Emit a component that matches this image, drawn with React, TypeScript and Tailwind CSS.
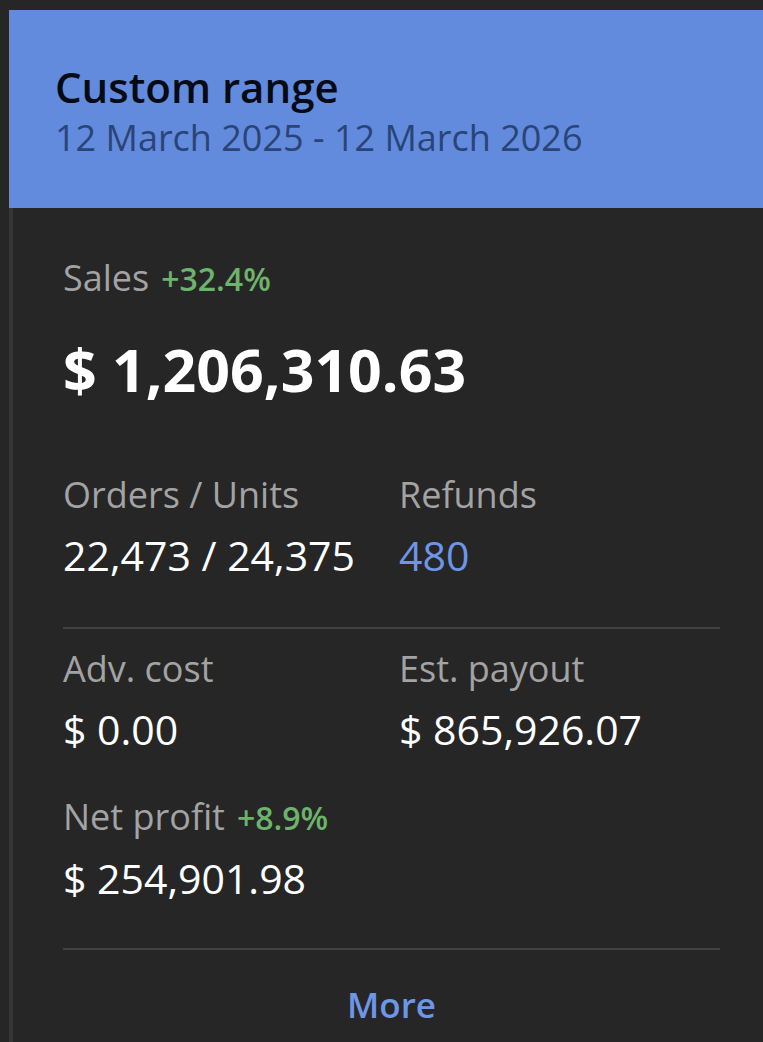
const font = { fontFamily: '"Open Sans", "Noto Sans", sans-serif' };

function Metric({ label, value, delta, valueClass = "text-white" }: { label: string; value: string; delta?: string; valueClass?: string }) {
  return (
    <div>
      <div className="flex items-baseline gap-3 text-[36px] leading-[44px] text-[#a3a3a3]">
        <span>{label}</span>
        {delta && <span className="text-[32px] font-semibold text-[#6db36b]">{delta}</span>}
      </div>
      <div className={"mt-[14px] text-[41px] leading-[48px] " + valueClass}>{value}</div>
    </div>
  );
}

export default function App() {
  return (
    <div className="flex h-[1042px] w-[763px] flex-col overflow-hidden bg-[#262626] pt-[10px] pl-[9px]" style={font}>
      <div className="bg-[#628bdd] pl-[46px] pt-[52px] pb-[48px]">
        <div className="text-[42px] leading-[50px] font-semibold text-[#050a14]">Custom range</div>
        <div className="mt-[4px] text-[36px] leading-[44px] text-[#2a4478]">12 March 2025 - 12 March 2026</div>
      </div>
      <div className="flex flex-1">
        <div className="w-[4px] self-stretch bg-[#363636]" />
        <div className="flex-1 pl-[50px] pr-[43px] pt-[48px]">
          <div className="flex items-baseline gap-3 text-[36px] leading-[44px] text-[#a3a3a3]">
            <span>Sales</span>
            <span className="text-[32px] font-semibold text-[#6db36b]">+32.4%</span>
          </div>
          <div className="mt-[36px] text-[59px] leading-[64px] font-bold text-white">$ 1,206,310.63</div>

          <div className="mt-[72px] grid grid-cols-[336px_1fr] pb-[48px]">
            <Metric label="Orders / Units" value="22,473 / 24,375" />
            <Metric label="Refunds" value="480" valueClass="text-[#6e96e6]" />
          </div>
          <div className="h-[2px] bg-[#414141]" />

          <div className="mt-[18px] grid grid-cols-[336px_1fr] gap-y-[42px] pb-[46px]">
            <Metric label="Adv. cost" value="$ 0.00" />
            <Metric label="Est. payout" value="$ 865,926.07" />
            <Metric label="Net profit" value="$ 254,901.98" delta="+8.9%" />
          </div>
          <div className="h-[2px] bg-[#414141]" />

          <div className="pt-[31px] text-center text-[35px] leading-[48px] font-semibold text-[#6e96e6]">More</div>
        </div>
      </div>
    </div>
  );
}
